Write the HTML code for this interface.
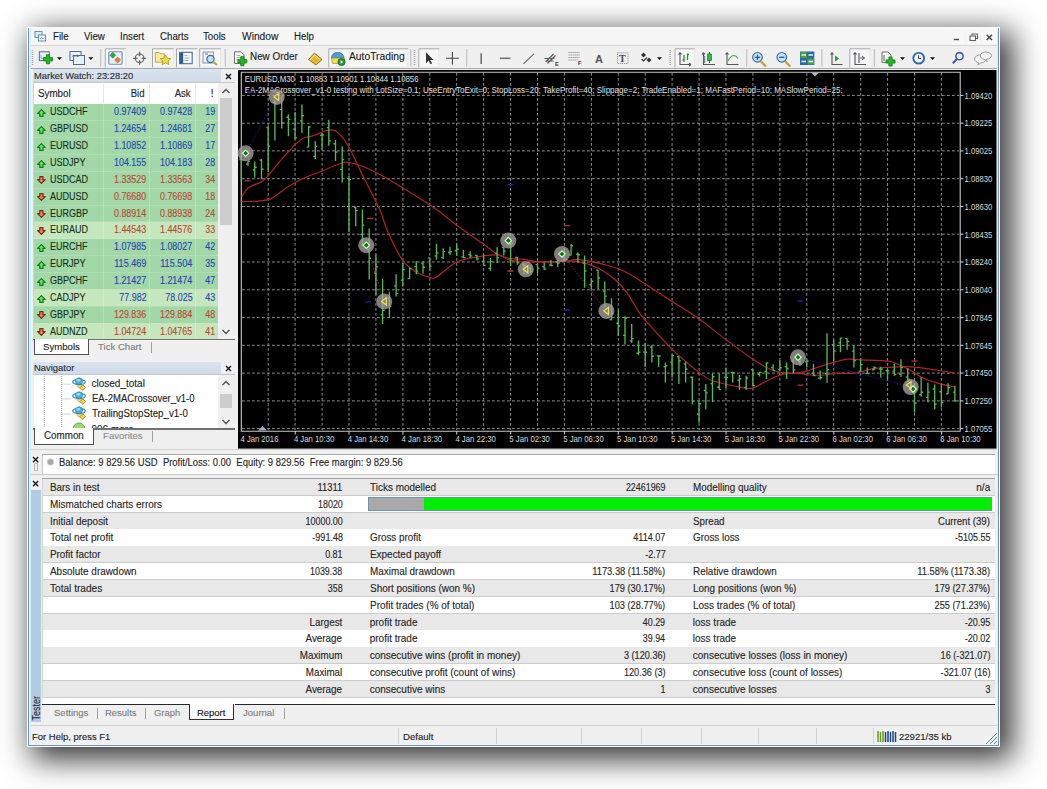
<!DOCTYPE html><html><head><meta charset="utf-8"><style>
*{margin:0;padding:0;box-sizing:border-box}
html,body{width:1047px;height:789px;overflow:hidden;background:#fff}
body{position:relative;font-family:"Liberation Sans",sans-serif;font-size:10px;color:#1e1e1e}
.a{position:absolute}
.t{position:absolute;white-space:nowrap;line-height:1;-webkit-text-stroke:0.12px currentColor}
svg{position:absolute;overflow:visible}
</style></head><body>
<div class="a" style="left:27px;top:26.5px;width:973px;height:720.2px;background:#f0f0f0;box-shadow:8px 8px 29px 4.5px rgba(0,0,0,0.8)"></div>
<div class="a" style="left:27px;top:26.5px;width:973px;height:720.2px;background:transparent;border:1px solid #f6fbfe"></div>
<div class="a" style="left:28px;top:27.5px;width:971px;height:718.2px;background:transparent;border:1.5px solid #6f94b4;border-top:none"></div>
<div class="a" style="left:29.5px;top:27.5px;width:968px;height:715.7px;background:transparent;border:1px solid #d8f0fa;border-top:none"></div>
<div class="a" style="left:30.5px;top:27.5px;width:966px;height:18px;background:#f6f6f6;"></div>
<div class="a" style="left:30.5px;top:45.2px;width:966px;height:1px;background:#d6d6d6;"></div>
<div class="t" style="left:53.30px;top:32.33px;font-size:10px;color:#1a1a1a;transform-origin:0 0;transform:scaleX(0.970);">File</div>
<div class="t" style="left:83.90px;top:32.33px;font-size:10px;color:#1a1a1a;transform-origin:0 0;transform:scaleX(0.970);">View</div>
<div class="t" style="left:119.80px;top:32.33px;font-size:10px;color:#1a1a1a;transform-origin:0 0;transform:scaleX(0.970);">Insert</div>
<div class="t" style="left:159.50px;top:32.33px;font-size:10px;color:#1a1a1a;transform-origin:0 0;transform:scaleX(0.970);">Charts</div>
<div class="t" style="left:203.30px;top:32.33px;font-size:10px;color:#1a1a1a;transform-origin:0 0;transform:scaleX(0.970);">Tools</div>
<div class="t" style="left:242.00px;top:32.33px;font-size:10px;color:#1a1a1a;transform-origin:0 0;transform:scaleX(1.020);">Window</div>
<div class="t" style="left:294.00px;top:32.33px;font-size:10px;color:#1a1a1a;transform-origin:0 0;transform:scaleX(0.970);">Help</div>
<div class="a" style="left:30.5px;top:46.2px;width:966px;height:22px;background:#f0f0f0;"></div>
<div class="a" style="left:30.5px;top:68px;width:966px;height:1px;background:#a8a8a8;"></div>
<svg style="left:0px;top:0px" width="1047" height="75" viewBox="0 0 1047 75"><rect x="35" y="31.5" width="7" height="6" fill="#dceaf6" stroke="#6a8cb0" stroke-width="1"/><rect x="38.5" y="35" width="7" height="6" fill="#e8f2fa" stroke="#6a8cb0" stroke-width="1"/><path d="M40 39l1.5-1.5l1.5 1.5l1.5-1.5" stroke="#6a8cb0" stroke-width="0.7" fill="none"/><rect x="951" y="30.5" width="13" height="13.5" fill="#f8f8f8"/><rect x="967" y="30.5" width="13" height="13.5" fill="#f8f8f8"/><rect x="982.5" y="30.5" width="13" height="13.5" fill="#f8f8f8"/><path d="M953.8 39.5H959" stroke="#505050" stroke-width="1.5"/><rect x="970" y="36" width="5.5" height="4.5" fill="none" stroke="#606060" stroke-width="1.1"/><path d="M972 35.5V34h5.5v4.5H976" fill="none" stroke="#606060" stroke-width="1.1"/><path d="M986.7 34.7L992 40M992 34.7L986.7 40" stroke="#484848" stroke-width="1.5"/><path d="M32.5 50V66" stroke="#a0a0a0" stroke-width="1.6" stroke-dasharray="1 1"/><rect x="39.3" y="51.8" width="10" height="8.7" fill="#e4f0fa" stroke="#5a6a80" stroke-width="1"/><path d="M41 54.5v4h3" stroke="#8a9ab0" stroke-width="0.8" fill="none"/><path d="M46.4 54.8H49.6V57.6H52.5V60.9H49.6V63.8H46.4V60.9H43.5V57.6H46.4Z" fill="#22b822" stroke="#0a7a0a" stroke-width="0.8"/><path d="M57.0 57.3h5l-2.5 2.8z" fill="#111"/><rect x="70" y="51.5" width="11" height="9" fill="#e4f0fa" stroke="#5a6a80" stroke-width="1"/><rect x="73.5" y="55.5" width="11" height="9" fill="#e4f0fa" stroke="#5a6a80" stroke-width="1"/><path d="M72 56h7l-1.5-1.2M77 56.8l1.5-0.8" stroke="#5a6a80" stroke-width="0.8" fill="none"/><path d="M88.3 57.3h5l-2.5 2.8z" fill="#111"/><path d="M100.7 49V66.5" stroke="#bcbcbc" stroke-width="1.1"/><rect x="104.8" y="48.3" width="21.2" height="19.2" fill="#f7f7f7"/><path d="M105.3 67.5V48.8H126.0" stroke="#a8a8a8" stroke-width="1" fill="none"/><path d="M125.5 49.3V67.0H105.8" stroke="#e6e6e6" stroke-width="1" fill="none"/><rect x="108.8" y="51.8" width="13.3" height="12.5" rx="1" fill="#e8f2fa" stroke="#6a8ab0" stroke-width="1.1"/><path d="M112.8 52.3l3 3l-3 3l-3-3z" fill="#30a848" stroke="#1a7a30" stroke-width="0.5"/><path d="M117.6 57l3 3l-3 3l-3-3z" fill="#f07a40" stroke="#b04a20" stroke-width="0.5"/><circle cx="139.6" cy="58.3" r="4.3" fill="none" stroke="#606060" stroke-width="1.1"/><path d="M139.6 51.8V56.3M139.6 60.3V64.8M133.1 58.3H137.6M141.6 58.3H146.1" stroke="#606060" stroke-width="1.2"/><rect x="152" y="48.3" width="21.8" height="19.2" fill="#f7f7f7"/><path d="M152.5 67.5V48.8H173.8" stroke="#a8a8a8" stroke-width="1" fill="none"/><path d="M173.3 49.3V67.0H153.0" stroke="#e6e6e6" stroke-width="1" fill="none"/><path d="M155.3 52.5h4l1 1.2h4v8.5h-9z" fill="#f8eaa0" stroke="#b8a040" stroke-width="0.9"/><path d="M165.5 55l1.7 3.3 3.6 .4-2.7 2.4 .8 3.6-3.4-1.9-3.4 1.9.8-3.6-2.7-2.4 3.6-.4z" fill="#f4dc40" stroke="#a89020" stroke-width="0.8"/><rect x="176" y="48.3" width="21.4" height="19.2" fill="#f7f7f7"/><path d="M176.5 67.5V48.8H197.4" stroke="#a8a8a8" stroke-width="1" fill="none"/><path d="M196.9 49.3V67.0H177.0" stroke="#e6e6e6" stroke-width="1" fill="none"/><rect x="179.6" y="52.3" width="12.6" height="11.4" fill="#f4f8fc" stroke="#4a6a90" stroke-width="1.1"/><rect x="180" y="52.7" width="3.2" height="10.8" fill="#2a5a90"/><path d="M184.5 55.5h3M184.5 58h5M184.5 60.5h4" stroke="#90a8c8" stroke-width="0.9"/><rect x="199.2" y="48.3" width="21.8" height="19.2" fill="#f7f7f7"/><path d="M199.7 67.5V48.8H221.0" stroke="#a8a8a8" stroke-width="1" fill="none"/><path d="M220.5 49.3V67.0H200.2" stroke="#e6e6e6" stroke-width="1" fill="none"/><rect x="203" y="52" width="10.5" height="11" fill="#f0f4f8" stroke="#7a8aa0" stroke-width="0.9"/><circle cx="210.5" cy="59" r="3.6" fill="#bfe0f4" stroke="#3a6a9a" stroke-width="1.2"/><path d="M213 61.5l4 3.6" stroke="#c8a030" stroke-width="2"/><path d="M205 54h3" stroke="#3a6a9a" stroke-width="0.9"/><path d="M225.3 49V66.5" stroke="#bcbcbc" stroke-width="1.1"/><path d="M234.5 51.8h6.5l3 3v8.7h-9.5z" fill="#fafafa" stroke="#707070" stroke-width="1"/><path d="M236.5 55.5h4M236.5 57.5h5M236.5 59.5h3" stroke="#9a9a9a" stroke-width="0.8"/><path d="M240.7 56.7H244.0V59.6H246.8V62.9H244.0V65.7H240.7V62.9H237.8V59.6H240.7Z" fill="#22b822" stroke="#0a7a0a" stroke-width="0.8"/><path d="M308.5 59.5l6-6.5l7.5 6.5l-6 5.5z" fill="#e8b830" stroke="#8a6a10" stroke-width="0.9"/><path d="M310 59.8l4.6-4.9 5.5 4.8" stroke="#fff0a0" stroke-width="0.9" fill="none"/><rect x="328.3" y="48.3" width="80.0" height="19.2" fill="#f7f7f7"/><path d="M328.8 67.5V48.8H408.3" stroke="#a8a8a8" stroke-width="1" fill="none"/><path d="M407.8 49.3V67.0H329.3" stroke="#e6e6e6" stroke-width="1" fill="none"/><path d="M331.5 58c0-3.5 2.5-5.5 6-5.5c3.5 0 6 2 6.5 5z" fill="#4aa0d8" stroke="#2a70a8" stroke-width="0.8"/><path d="M331.5 58h13l-1 5.5h-11z" fill="#f2dc58" stroke="#b09a30" stroke-width="0.8"/><circle cx="341.5" cy="62" r="3.6" fill="#1e9a30" stroke="#0a6a1a" stroke-width="0.8"/><path d="M340.5 60.2v3.6l2.8-1.8z" fill="#fff"/><path d="M410.8 49V66.5" stroke="#bcbcbc" stroke-width="1.1"/><path d="M414.5 50V66" stroke="#a0a0a0" stroke-width="1.6" stroke-dasharray="1 1"/><rect x="418.3" y="48.3" width="21.1" height="19.2" fill="#f7f7f7"/><path d="M418.8 67.5V48.8H439.4" stroke="#a8a8a8" stroke-width="1" fill="none"/><path d="M438.9 49.3V67.0H419.3" stroke="#e6e6e6" stroke-width="1" fill="none"/><path d="M426 52.2v11l2.5-2.6l2 3.6l1.6-.9l-2-3.4h3.5z" fill="#333"/><path d="M452.4 52v12.6M446 58.3h12.8" stroke="#444" stroke-width="1.1"/><path d="M466.7 49V66.5" stroke="#bcbcbc" stroke-width="1.1"/><path d="M481.2 53.3V63.9" stroke="#707070" stroke-width="1.6"/><path d="M499.8 58.3H510.4" stroke="#707070" stroke-width="1.5"/><path d="M523.4 63.9L534 53.9" stroke="#707070" stroke-width="1.3"/><path d="M545.5 62l8-8M547.5 63.5l8-8M544.5 58.5h10M545.5 61h8" stroke="#555" stroke-width="1.1"/><text x="555" y="65.5" font-family="Liberation Sans" font-weight="bold" font-size="5.5px" fill="#333">E</text><path d="M568.5 52.5h11M568.5 55h11M568.5 57.5h11M568.5 60h9" stroke="#777" stroke-width="0.9" stroke-dasharray="1.2 0.8"/><text x="578" y="65" font-family="Liberation Sans" font-weight="bold" font-size="5.5px" fill="#333">F</text><text x="595" y="63.2" font-family="Liberation Sans" font-weight="bold" font-size="11px" fill="#555">A</text><rect x="617.5" y="52.8" width="10.5" height="10.7" fill="none" stroke="#777" stroke-width="0.9" stroke-dasharray="1 1"/><text x="619" y="62" font-family="Liberation Serif" font-weight="bold" font-size="10px" fill="#444">T</text><path d="M641 55l2.5-2.5 2.5 2.5-2.5 2.5z" fill="#333"/><path d="M646.5 60l2.5-2.5 2.5 2.5-2.5 2.5z" fill="#333"/><path d="M641.5 59l2 2 3.5-3.5" stroke="#333" stroke-width="1.2" fill="none"/><path d="M657.0 57.3h5l-2.5 2.8z" fill="#111"/><path d="M670.2 50V66" stroke="#a0a0a0" stroke-width="1.6" stroke-dasharray="1 1"/><rect x="674.5" y="48.3" width="20.5" height="19.2" fill="#f7f7f7"/><path d="M675.0 67.5V48.8H695.0" stroke="#a8a8a8" stroke-width="1" fill="none"/><path d="M694.5 49.3V67.0H675.5" stroke="#e6e6e6" stroke-width="1" fill="none"/><path d="M680 52.5V64.5H691M680 52.5l-1.5 2M680 52.5l1.5 2M691 64.5l-2-1.5M691 64.5l-2 1.5" stroke="#505860" stroke-width="1.1" fill="none"/><path d="M684 55v7M682.5 60h1.5M687.5 53.5v6.5M687.5 54.5h1.5" stroke="#1a9a30" stroke-width="1.3" fill="none"/><path d="M703.5 52.5V64.5H715M703.5 52.5l-1.5 2M703.5 52.5l1.5 2" stroke="#505860" stroke-width="1.1" fill="none"/><path d="M709.5 52v11" stroke="#1a6a1a" stroke-width="1"/><rect x="707.6" y="54" width="3.8" height="6.5" fill="#28c040" stroke="#0a7a1a" stroke-width="0.7"/><path d="M704.5 56v7" stroke="#888" stroke-width="1.5"/><path d="M727 52.5V64.5H738.5M727 52.5l-1.5 2M727 52.5l1.5 2" stroke="#505860" stroke-width="1.1" fill="none"/><path d="M728 61c2-4 4-5.5 6-5.5c1.5 0 3 1.5 4 3" stroke="#48a050" stroke-width="1.1" fill="none"/><path d="M746.7 49V66.5" stroke="#bcbcbc" stroke-width="1.1"/><path d="M761.0 61.5l5 5" stroke="#c8a030" stroke-width="2.4"/><circle cx="757.5" cy="57.3" r="4.8" fill="#c0e4f8" stroke="#3a6a9a" stroke-width="1.2"/><path d="M754.9 57.3h5.2M757.5 54.7v5.2" stroke="#2a5a8a" stroke-width="1.3"/><path d="M785.3 61.5l5 5" stroke="#c8a030" stroke-width="2.4"/><circle cx="781.8" cy="57.3" r="4.8" fill="#c0e4f8" stroke="#3a6a9a" stroke-width="1.2"/><path d="M779.2 57.3h5.2" stroke="#2a5a8a" stroke-width="1.3"/><rect x="800" y="51.5" width="14.3" height="13.5" fill="#2a6aaa"/><rect x="800.5" y="52" width="6.4" height="6" fill="#48a048"/><rect x="807.6" y="58.5" width="6.4" height="6" fill="#48a048"/><path d="M801.5 55h4.5M808.5 55h4.5M801.5 61.5h4.5M808.5 61.5h4.5" stroke="#e8f4e8" stroke-width="1.6"/><path d="M821.9 49V66.5" stroke="#bcbcbc" stroke-width="1.1"/><path d="M832 52.5V64.5H842.5M832 52.5l-1.5 2M832 52.5l1.5 2" stroke="#505860" stroke-width="1.1" fill="none"/><path d="M835 55.5v6l4-3z" fill="#20a030"/><rect x="849.3" y="48.3" width="21.1" height="19.2" fill="#f7f7f7"/><path d="M849.8 67.5V48.8H870.4" stroke="#a8a8a8" stroke-width="1" fill="none"/><path d="M869.9 49.3V67.0H850.3" stroke="#e6e6e6" stroke-width="1" fill="none"/><path d="M855 52.5V64.5H866M855 52.5l-1.5 2M855 52.5l1.5 2M859 53v10" stroke="#505860" stroke-width="1.1" fill="none"/><path d="M860 58h4.5M862 56l2.5 2-2.5 2" stroke="#505860" stroke-width="1" fill="none"/><path d="M874.4 49V66.5" stroke="#bcbcbc" stroke-width="1.1"/><path d="M882 52h6l3 3v7.5h-9z" fill="#f6f6f6" stroke="#707070" stroke-width="1"/><path d="M884 55v6" stroke="#777" stroke-width="1.2"/><path d="M888.9 57.0H892.1V59.9H895.0V63.1H892.1V66.0H888.9V63.1H886.0V59.9H888.9Z" fill="#22b822" stroke="#0a7a0a" stroke-width="0.8"/><path d="M900.0 57.3h5l-2.5 2.8z" fill="#111"/><circle cx="918.7" cy="58.2" r="6.3" fill="#2a6ab0"/><circle cx="918.7" cy="58.2" r="4.4" fill="#f4f8fc"/><path d="M918.5 55.5v3h2.5" stroke="#333" stroke-width="0.9" fill="none"/><path d="M930.0 57.3h5l-2.5 2.8z" fill="#111"/><circle cx="959.5" cy="56.2" r="3.6" fill="#eef6fc" stroke="#3a5aa8" stroke-width="1.6"/><path d="M957 59l-4.2 4.2" stroke="#3a5aa8" stroke-width="2.2"/><path d="M980.5 55c-3.5 0-5.8 1.7-5.8 4c0 2 1.6 3.4 4 3.8l-.8 2.2 3-2.1c3.2-.2 5.4-1.8 5.4-3.9c0-2.3-2.5-4-5.8-4z" fill="#f4f4f4" stroke="#909090" stroke-width="0.9"/><path d="M986 52c-3.3 0-5.6 1.6-5.6 3.8c0 1.9 1.6 3.3 4 3.7l2.8 1.9-.7-2c2.4-.4 5-1.7 5-3.6c0-2.2-2.3-3.8-5.5-3.8z" fill="#f4f4f4" stroke="#909090" stroke-width="0.9"/></svg>
<div class="t" style="left:250.30px;top:51.97px;font-size:10.2px;color:#1a1a1a;transform-origin:0 0;transform:scaleX(0.969);">New Order</div>
<div class="t" style="left:349.00px;top:52.08px;font-size:10.3px;color:#1a1a1a;transform-origin:0 0;">AutoTrading</div>
<div class="a" style="left:32.5px;top:69px;width:202.5px;height:13px;background:#edf1f5;"></div>
<div class="a" style="left:32.5px;top:69px;width:188.7px;height:13px;background:linear-gradient(#dae4f0,#cfdbea);"></div>
<div class="t" style="left:33.80px;top:70.67px;font-size:9.6px;color:#2a2a2a;transform-origin:0 0;transform:scaleX(0.977);">Market Watch: 23:28:20</div>
<svg style="left:225.3px;top:72.5px" width="7.0" height="7.0"><path d="M1 1L6.0 6.0M6.0 1L1 6.0" stroke="#151515" stroke-width="1.35"/></svg>
<div class="a" style="left:32.5px;top:81.8px;width:202.5px;height:1.3px;background:#c6c6c6;"></div>
<div class="a" style="left:32.5px;top:83px;width:1px;height:256px;background:#d0d0d0;"></div>
<div class="a" style="left:33.5px;top:83px;width:184.7px;height:20.8px;background:#ffffff;"></div>
<div class="a" style="left:103.1px;top:84px;width:1px;height:19px;background:#e8e8e8;"></div>
<div class="a" style="left:149.4px;top:84px;width:1px;height:19px;background:#e8e8e8;"></div>
<div class="a" style="left:195.1px;top:84px;width:1px;height:19px;background:#e8e8e8;"></div>
<div class="t" style="left:38.00px;top:88.73px;font-size:10px;color:#222;transform-origin:0 0;transform:scaleX(0.980);">Symbol</div>
<div class="t" style="right:902.80px;top:88.73px;font-size:10px;color:#222;transform-origin:100% 0;transform:scaleX(0.954);">Bid</div>
<div class="t" style="right:856.00px;top:88.73px;font-size:10px;color:#222;transform-origin:100% 0;transform:scaleX(0.960);">Ask</div>
<div class="t" style="right:833.50px;top:88.73px;font-size:10px;color:#222;transform-origin:100% 0;">!</div>
<div class="a" style="left:33.5px;top:103.8px;width:184.7px;height:234.7px;background:#a2d7a8;"></div>
<div class="a" style="left:33.5px;top:120.2px;width:184.7px;height:0.6px;background:rgba(255,255,255,0.18);"></div>
<div class="a" style="left:33.5px;top:137.08px;width:184.7px;height:0.6px;background:rgba(255,255,255,0.18);"></div>
<div class="a" style="left:33.5px;top:153.96px;width:184.7px;height:0.6px;background:rgba(255,255,255,0.18);"></div>
<div class="a" style="left:33.5px;top:170.84px;width:184.7px;height:0.6px;background:rgba(255,255,255,0.18);"></div>
<div class="a" style="left:33.5px;top:187.72px;width:184.7px;height:0.6px;background:rgba(255,255,255,0.18);"></div>
<div class="a" style="left:33.5px;top:204.6px;width:184.7px;height:0.6px;background:rgba(255,255,255,0.18);"></div>
<div class="a" style="left:33.5px;top:221.48px;width:184.7px;height:0.6px;background:rgba(255,255,255,0.18);"></div>
<div class="a" style="left:33.5px;top:221.96px;width:184.7px;height:16.9px;background:#c6e6bd;"></div>
<div class="a" style="left:33.5px;top:238.36px;width:184.7px;height:0.6px;background:rgba(255,255,255,0.18);"></div>
<div class="a" style="left:33.5px;top:255.24px;width:184.7px;height:0.6px;background:rgba(255,255,255,0.18);"></div>
<div class="a" style="left:33.5px;top:272.12px;width:184.7px;height:0.6px;background:rgba(255,255,255,0.18);"></div>
<div class="a" style="left:33.5px;top:289.0px;width:184.7px;height:0.6px;background:rgba(255,255,255,0.18);"></div>
<div class="a" style="left:33.5px;top:289.48px;width:184.7px;height:16.9px;background:#c6e6bd;"></div>
<div class="a" style="left:33.5px;top:305.88px;width:184.7px;height:0.6px;background:rgba(255,255,255,0.18);"></div>
<div class="a" style="left:33.5px;top:322.76px;width:184.7px;height:0.6px;background:rgba(255,255,255,0.18);"></div>
<div class="a" style="left:33.5px;top:323.24px;width:184.7px;height:16.9px;background:#c6e6bd;"></div>
<div class="a" style="left:33.5px;top:339.64px;width:184.7px;height:0.6px;background:rgba(255,255,255,0.18);"></div>
<div class="a" style="left:103.1px;top:103.8px;width:1px;height:234.7px;background:rgba(255,255,255,0.22);"></div>
<div class="a" style="left:149.4px;top:103.8px;width:1px;height:234.7px;background:rgba(255,255,255,0.22);"></div>
<div class="a" style="left:195.1px;top:103.8px;width:1px;height:234.7px;background:rgba(255,255,255,0.22);"></div>
<div class="t" style="left:50.20px;top:107.33px;font-size:10px;color:#183018;transform-origin:0 0;transform:scaleX(0.900);">USDCHF</div>
<div class="t" style="right:900.70px;top:107.33px;font-size:10px;color:#2646b4;transform-origin:100% 0;transform:scaleX(0.890);">0.97409</div>
<div class="t" style="right:854.50px;top:107.33px;font-size:10px;color:#2646b4;transform-origin:100% 0;transform:scaleX(0.890);">0.97428</div>
<div class="t" style="right:831.40px;top:107.33px;font-size:10px;color:#2646b4;transform-origin:100% 0;transform:scaleX(0.890);">19</div>
<svg style="left:36.6px;top:109.00px" width="9" height="8" viewBox="0 0 9 8"><path d="M4.4 0.6L8.2 4.4H6V7.4H2.8V4.4H0.6Z" fill="#6ee06e" stroke="#0a800a" stroke-width="1.2" stroke-linejoin="round"/></svg>
<div class="t" style="left:50.20px;top:124.22px;font-size:10px;color:#183018;transform-origin:0 0;transform:scaleX(0.900);">GBPUSD</div>
<div class="t" style="right:900.70px;top:124.22px;font-size:10px;color:#2646b4;transform-origin:100% 0;transform:scaleX(0.890);">1.24654</div>
<div class="t" style="right:854.50px;top:124.22px;font-size:10px;color:#2646b4;transform-origin:100% 0;transform:scaleX(0.890);">1.24681</div>
<div class="t" style="right:831.40px;top:124.22px;font-size:10px;color:#2646b4;transform-origin:100% 0;transform:scaleX(0.890);">27</div>
<svg style="left:36.6px;top:125.88px" width="9" height="8" viewBox="0 0 9 8"><path d="M4.4 0.6L8.2 4.4H6V7.4H2.8V4.4H0.6Z" fill="#6ee06e" stroke="#0a800a" stroke-width="1.2" stroke-linejoin="round"/></svg>
<div class="t" style="left:50.20px;top:141.09px;font-size:10px;color:#183018;transform-origin:0 0;transform:scaleX(0.900);">EURUSD</div>
<div class="t" style="right:900.70px;top:141.09px;font-size:10px;color:#2646b4;transform-origin:100% 0;transform:scaleX(0.890);">1.10852</div>
<div class="t" style="right:854.50px;top:141.09px;font-size:10px;color:#2646b4;transform-origin:100% 0;transform:scaleX(0.890);">1.10869</div>
<div class="t" style="right:831.40px;top:141.09px;font-size:10px;color:#2646b4;transform-origin:100% 0;transform:scaleX(0.890);">17</div>
<svg style="left:36.6px;top:142.76px" width="9" height="8" viewBox="0 0 9 8"><path d="M4.4 0.6L8.2 4.4H6V7.4H2.8V4.4H0.6Z" fill="#6ee06e" stroke="#0a800a" stroke-width="1.2" stroke-linejoin="round"/></svg>
<div class="t" style="left:50.20px;top:157.97px;font-size:10px;color:#183018;transform-origin:0 0;transform:scaleX(0.900);">USDJPY</div>
<div class="t" style="right:900.70px;top:157.97px;font-size:10px;color:#2646b4;transform-origin:100% 0;transform:scaleX(0.890);">104.155</div>
<div class="t" style="right:854.50px;top:157.97px;font-size:10px;color:#2646b4;transform-origin:100% 0;transform:scaleX(0.890);">104.183</div>
<div class="t" style="right:831.40px;top:157.97px;font-size:10px;color:#2646b4;transform-origin:100% 0;transform:scaleX(0.890);">28</div>
<svg style="left:36.6px;top:159.64px" width="9" height="8" viewBox="0 0 9 8"><path d="M4.4 0.6L8.2 4.4H6V7.4H2.8V4.4H0.6Z" fill="#6ee06e" stroke="#0a800a" stroke-width="1.2" stroke-linejoin="round"/></svg>
<div class="t" style="left:50.20px;top:174.85px;font-size:10px;color:#183018;transform-origin:0 0;transform:scaleX(0.900);">USDCAD</div>
<div class="t" style="right:900.70px;top:174.85px;font-size:10px;color:#bc4830;transform-origin:100% 0;transform:scaleX(0.890);">1.33529</div>
<div class="t" style="right:854.50px;top:174.85px;font-size:10px;color:#bc4830;transform-origin:100% 0;transform:scaleX(0.890);">1.33563</div>
<div class="t" style="right:831.40px;top:174.85px;font-size:10px;color:#bc4830;transform-origin:100% 0;transform:scaleX(0.890);">34</div>
<svg style="left:36.6px;top:176.22px" width="9" height="8" viewBox="0 0 9 8"><path d="M4.4 7.4L8.2 3.6H6V0.6H2.8V3.6H0.6Z" fill="#f48060" stroke="#7a2a10" stroke-width="1.2" stroke-linejoin="round"/></svg>
<div class="t" style="left:50.20px;top:191.73px;font-size:10px;color:#183018;transform-origin:0 0;transform:scaleX(0.900);">AUDUSD</div>
<div class="t" style="right:900.70px;top:191.73px;font-size:10px;color:#bc4830;transform-origin:100% 0;transform:scaleX(0.890);">0.76680</div>
<div class="t" style="right:854.50px;top:191.73px;font-size:10px;color:#bc4830;transform-origin:100% 0;transform:scaleX(0.890);">0.76698</div>
<div class="t" style="right:831.40px;top:191.73px;font-size:10px;color:#bc4830;transform-origin:100% 0;transform:scaleX(0.890);">18</div>
<svg style="left:36.6px;top:193.10px" width="9" height="8" viewBox="0 0 9 8"><path d="M4.4 7.4L8.2 3.6H6V0.6H2.8V3.6H0.6Z" fill="#f48060" stroke="#7a2a10" stroke-width="1.2" stroke-linejoin="round"/></svg>
<div class="t" style="left:50.20px;top:208.61px;font-size:10px;color:#183018;transform-origin:0 0;transform:scaleX(0.900);">EURGBP</div>
<div class="t" style="right:900.70px;top:208.61px;font-size:10px;color:#bc4830;transform-origin:100% 0;transform:scaleX(0.890);">0.88914</div>
<div class="t" style="right:854.50px;top:208.61px;font-size:10px;color:#bc4830;transform-origin:100% 0;transform:scaleX(0.890);">0.88938</div>
<div class="t" style="right:831.40px;top:208.61px;font-size:10px;color:#bc4830;transform-origin:100% 0;transform:scaleX(0.890);">24</div>
<svg style="left:36.6px;top:209.98px" width="9" height="8" viewBox="0 0 9 8"><path d="M4.4 7.4L8.2 3.6H6V0.6H2.8V3.6H0.6Z" fill="#f48060" stroke="#7a2a10" stroke-width="1.2" stroke-linejoin="round"/></svg>
<div class="t" style="left:50.20px;top:225.49px;font-size:10px;color:#183018;transform-origin:0 0;transform:scaleX(0.900);">EURAUD</div>
<div class="t" style="right:900.70px;top:225.49px;font-size:10px;color:#bc4830;transform-origin:100% 0;transform:scaleX(0.890);">1.44543</div>
<div class="t" style="right:854.50px;top:225.49px;font-size:10px;color:#bc4830;transform-origin:100% 0;transform:scaleX(0.890);">1.44576</div>
<div class="t" style="right:831.40px;top:225.49px;font-size:10px;color:#bc4830;transform-origin:100% 0;transform:scaleX(0.890);">33</div>
<svg style="left:36.6px;top:226.86px" width="9" height="8" viewBox="0 0 9 8"><path d="M4.4 7.4L8.2 3.6H6V0.6H2.8V3.6H0.6Z" fill="#f48060" stroke="#7a2a10" stroke-width="1.2" stroke-linejoin="round"/></svg>
<div class="t" style="left:50.20px;top:242.37px;font-size:10px;color:#183018;transform-origin:0 0;transform:scaleX(0.900);">EURCHF</div>
<div class="t" style="right:900.70px;top:242.37px;font-size:10px;color:#2646b4;transform-origin:100% 0;transform:scaleX(0.890);">1.07985</div>
<div class="t" style="right:854.50px;top:242.37px;font-size:10px;color:#2646b4;transform-origin:100% 0;transform:scaleX(0.890);">1.08027</div>
<div class="t" style="right:831.40px;top:242.37px;font-size:10px;color:#2646b4;transform-origin:100% 0;transform:scaleX(0.890);">42</div>
<svg style="left:36.6px;top:244.04px" width="9" height="8" viewBox="0 0 9 8"><path d="M4.4 0.6L8.2 4.4H6V7.4H2.8V4.4H0.6Z" fill="#6ee06e" stroke="#0a800a" stroke-width="1.2" stroke-linejoin="round"/></svg>
<div class="t" style="left:50.20px;top:259.25px;font-size:10px;color:#183018;transform-origin:0 0;transform:scaleX(0.900);">EURJPY</div>
<div class="t" style="right:900.70px;top:259.25px;font-size:10px;color:#2646b4;transform-origin:100% 0;transform:scaleX(0.909);">115.469</div>
<div class="t" style="right:854.50px;top:259.25px;font-size:10px;color:#2646b4;transform-origin:100% 0;transform:scaleX(0.909);">115.504</div>
<div class="t" style="right:831.40px;top:259.25px;font-size:10px;color:#2646b4;transform-origin:100% 0;transform:scaleX(0.890);">35</div>
<svg style="left:36.6px;top:260.92px" width="9" height="8" viewBox="0 0 9 8"><path d="M4.4 0.6L8.2 4.4H6V7.4H2.8V4.4H0.6Z" fill="#6ee06e" stroke="#0a800a" stroke-width="1.2" stroke-linejoin="round"/></svg>
<div class="t" style="left:50.20px;top:276.13px;font-size:10px;color:#183018;transform-origin:0 0;transform:scaleX(0.900);">GBPCHF</div>
<div class="t" style="right:900.70px;top:276.13px;font-size:10px;color:#2646b4;transform-origin:100% 0;transform:scaleX(0.890);">1.21427</div>
<div class="t" style="right:854.50px;top:276.13px;font-size:10px;color:#2646b4;transform-origin:100% 0;transform:scaleX(0.890);">1.21474</div>
<div class="t" style="right:831.40px;top:276.13px;font-size:10px;color:#2646b4;transform-origin:100% 0;transform:scaleX(0.890);">47</div>
<svg style="left:36.6px;top:277.80px" width="9" height="8" viewBox="0 0 9 8"><path d="M4.4 0.6L8.2 4.4H6V7.4H2.8V4.4H0.6Z" fill="#6ee06e" stroke="#0a800a" stroke-width="1.2" stroke-linejoin="round"/></svg>
<div class="t" style="left:50.20px;top:293.01px;font-size:10px;color:#183018;transform-origin:0 0;transform:scaleX(0.900);">CADJPY</div>
<div class="t" style="right:900.70px;top:293.01px;font-size:10px;color:#2646b4;transform-origin:100% 0;transform:scaleX(0.890);">77.982</div>
<div class="t" style="right:854.50px;top:293.01px;font-size:10px;color:#2646b4;transform-origin:100% 0;transform:scaleX(0.890);">78.025</div>
<div class="t" style="right:831.40px;top:293.01px;font-size:10px;color:#2646b4;transform-origin:100% 0;transform:scaleX(0.890);">43</div>
<svg style="left:36.6px;top:294.68px" width="9" height="8" viewBox="0 0 9 8"><path d="M4.4 0.6L8.2 4.4H6V7.4H2.8V4.4H0.6Z" fill="#6ee06e" stroke="#0a800a" stroke-width="1.2" stroke-linejoin="round"/></svg>
<div class="t" style="left:50.20px;top:309.90px;font-size:10px;color:#183018;transform-origin:0 0;transform:scaleX(0.900);">GBPJPY</div>
<div class="t" style="right:900.70px;top:309.90px;font-size:10px;color:#bc4830;transform-origin:100% 0;transform:scaleX(0.890);">129.836</div>
<div class="t" style="right:854.50px;top:309.90px;font-size:10px;color:#bc4830;transform-origin:100% 0;transform:scaleX(0.890);">129.884</div>
<div class="t" style="right:831.40px;top:309.90px;font-size:10px;color:#bc4830;transform-origin:100% 0;transform:scaleX(0.890);">48</div>
<svg style="left:36.6px;top:311.26px" width="9" height="8" viewBox="0 0 9 8"><path d="M4.4 7.4L8.2 3.6H6V0.6H2.8V3.6H0.6Z" fill="#f48060" stroke="#7a2a10" stroke-width="1.2" stroke-linejoin="round"/></svg>
<div class="t" style="left:50.20px;top:326.78px;font-size:10px;color:#183018;transform-origin:0 0;transform:scaleX(0.900);">AUDNZD</div>
<div class="t" style="right:900.70px;top:326.78px;font-size:10px;color:#bc4830;transform-origin:100% 0;transform:scaleX(0.890);">1.04724</div>
<div class="t" style="right:854.50px;top:326.78px;font-size:10px;color:#bc4830;transform-origin:100% 0;transform:scaleX(0.890);">1.04765</div>
<div class="t" style="right:831.40px;top:326.78px;font-size:10px;color:#bc4830;transform-origin:100% 0;transform:scaleX(0.890);">41</div>
<svg style="left:36.6px;top:328.14px" width="9" height="8" viewBox="0 0 9 8"><path d="M4.4 7.4L8.2 3.6H6V0.6H2.8V3.6H0.6Z" fill="#f48060" stroke="#7a2a10" stroke-width="1.2" stroke-linejoin="round"/></svg>
<div class="a" style="left:218.2px;top:83px;width:16px;height:255px;background:#f0f0f0;"></div>
<div class="a" style="left:220.3px;top:98px;width:11.7px;height:127px;background:#cdcdcd;"></div>
<svg style="left:221px;top:87px" width="10" height="8"><path d="M1.5 6 L5 2.5 L8.5 6" stroke="#555" stroke-width="1.5" fill="none"/></svg>
<svg style="left:221px;top:328px" width="10" height="8"><path d="M1.5 2 L5 5.5 L8.5 2" stroke="#555" stroke-width="1.5" fill="none"/></svg>
<div class="a" style="left:32.5px;top:338.5px;width:1.5px;height:1.5px;background:#707070;"></div>
<div class="a" style="left:89px;top:338.5px;width:146px;height:1.5px;background:#707070;"></div>
<div class="a" style="left:34px;top:338.5px;width:55px;height:16.5px;background:#ffffff;border:1.2px solid #505050;border-top:none"></div>
<div class="t" style="left:43.00px;top:342.10px;font-size:9.8px;color:#222;transform-origin:0 0;transform:scaleX(0.983);">Symbols</div>
<div class="t" style="left:97.80px;top:342.10px;font-size:9.8px;color:#7c7c7c;transform-origin:0 0;transform:scaleX(0.979);">Tick Chart</div>
<div class="a" style="left:151px;top:342px;width:1px;height:11px;background:#a0a0a0;"></div>
<div class="a" style="left:32.5px;top:361.5px;width:202.5px;height:12.3px;background:#edf1f5;"></div>
<div class="a" style="left:32.5px;top:361.5px;width:188.7px;height:12.3px;background:linear-gradient(#dae4f0,#cfdbea);"></div>
<div class="t" style="left:33.50px;top:362.77px;font-size:9.6px;color:#2a2a2a;transform-origin:0 0;transform:scaleX(0.983);">Navigator</div>
<svg style="left:225.3px;top:365px" width="7.0" height="7.0"><path d="M1 1L6.0 6.0M6.0 1L1 6.0" stroke="#151515" stroke-width="1.35"/></svg>
<div class="a" style="left:32.5px;top:373.6px;width:202.5px;height:1.2px;background:#c6c6c6;"></div>
<div class="a" style="left:33.5px;top:374.5px;width:184.7px;height:54px;background:#ffffff;"></div>
<div class="a" style="left:218.2px;top:374.5px;width:16px;height:54px;background:#f0f0f0;"></div>
<div class="a" style="left:220.3px;top:394px;width:11.7px;height:14px;background:#cdcdcd;"></div>
<svg style="left:221px;top:379px" width="10" height="8"><path d="M1.5 6 L5 2.5 L8.5 6" stroke="#555" stroke-width="1.5" fill="none"/></svg>
<svg style="left:221px;top:418px" width="10" height="8"><path d="M1.5 2 L5 5.5 L8.5 2" stroke="#555" stroke-width="1.5" fill="none"/></svg>
<svg style="left:33px;top:374px" width="185" height="54"><g stroke="#a8a8a8" stroke-width="1" stroke-dasharray="1 1"><path d="M11.3 0 V54 M28.6 0 V54 M28.6 10.2 H38 M28.6 24.9 H38 M28.6 40.1 H38"/></g></svg>
<svg style="left:72px;top:376.5px" width="15" height="14"><path d="M4 6.5Q7 10 10 7.5L11 10.5L8 11.5Q5 10.5 4 6.5Z" fill="#f2e08a" stroke="#b89a40" stroke-width="0.6"/><ellipse cx="7" cy="5" rx="6.3" ry="2.4" fill="none" stroke="#2e7aa8" stroke-width="1.1"/><circle cx="7" cy="4.3" r="3.5" fill="#48aee0" stroke="#2a78a8" stroke-width="0.6"/><ellipse cx="6.3" cy="3.3" rx="2" ry="1.2" fill="#a0daf6"/><path d="M10.8 7.8L13.6 10.6L10.8 13.4L8 10.6Z" fill="#f2d452" stroke="#9a7a20" stroke-width="0.8"/></svg>
<div class="t" style="left:91.50px;top:379.34px;font-size:10px;color:#222;transform-origin:0 0;">closed_total</div>
<svg style="left:72px;top:391.4px" width="15" height="14"><path d="M4 6.5Q7 10 10 7.5L11 10.5L8 11.5Q5 10.5 4 6.5Z" fill="#f2e08a" stroke="#b89a40" stroke-width="0.6"/><ellipse cx="7" cy="5" rx="6.3" ry="2.4" fill="none" stroke="#2e7aa8" stroke-width="1.1"/><circle cx="7" cy="4.3" r="3.5" fill="#48aee0" stroke="#2a78a8" stroke-width="0.6"/><ellipse cx="6.3" cy="3.3" rx="2" ry="1.2" fill="#a0daf6"/><path d="M10.8 7.8L13.6 10.6L10.8 13.4L8 10.6Z" fill="#f2d452" stroke="#9a7a20" stroke-width="0.8"/></svg>
<div class="t" style="left:91.50px;top:394.29px;font-size:10px;color:#222;transform-origin:0 0;transform:scaleX(0.950);">EA-2MACrossover_v1-0</div>
<svg style="left:72px;top:406.4px" width="15" height="14"><path d="M4 6.5Q7 10 10 7.5L11 10.5L8 11.5Q5 10.5 4 6.5Z" fill="#f2e08a" stroke="#b89a40" stroke-width="0.6"/><ellipse cx="7" cy="5" rx="6.3" ry="2.4" fill="none" stroke="#2e7aa8" stroke-width="1.1"/><circle cx="7" cy="4.3" r="3.5" fill="#48aee0" stroke="#2a78a8" stroke-width="0.6"/><ellipse cx="6.3" cy="3.3" rx="2" ry="1.2" fill="#a0daf6"/><path d="M10.8 7.8L13.6 10.6L10.8 13.4L8 10.6Z" fill="#f2d452" stroke="#9a7a20" stroke-width="0.8"/></svg>
<div class="t" style="left:91.50px;top:409.24px;font-size:10px;color:#222;transform-origin:0 0;transform:scaleX(0.972);">TrailingStopStep_v1-0</div>
<svg style="left:72px;top:422px" width="14" height="6"><path d="M1 7 A6 6 0 0 1 13 7Z" fill="#9ad870" stroke="#4a9a30" stroke-width="0.8"/></svg>
<div class="a" style="left:88px;top:424.5px;width:60px;height:3.5px;overflow:hidden"><div class="t" style="left:3.5px;top:0px;font-size:10px;color:#222">906 more</div></div>
<div class="a" style="left:32.5px;top:428px;width:1.8px;height:1.5px;background:#707070;"></div>
<div class="a" style="left:94.3px;top:428px;width:140.7px;height:1.5px;background:#707070;"></div>
<div class="a" style="left:34.3px;top:428px;width:60px;height:16.5px;background:#ffffff;border:1.2px solid #505050;border-top:none"></div>
<div class="t" style="left:43.80px;top:430.84px;font-size:10px;color:#222;transform-origin:0 0;transform:scaleX(0.982);">Common</div>
<div class="t" style="left:103.00px;top:431.00px;font-size:9.8px;color:#8c8c8c;transform-origin:0 0;transform:scaleX(0.985);">Favorites</div>
<div class="a" style="left:152px;top:431px;width:1px;height:11px;background:#a0a0a0;"></div>
<svg style="left:238px;top:70px" width="758.5" height="378.6" viewBox="238 70 758.5 378.6"><rect x="238" y="70" width="758.5" height="378.6" fill="#000"/><path d="M268.2 73V430 M295.1 73V430 M322.1 73V430 M349.0 73V430 M375.9 73V430 M402.9 73V430 M429.8 73V430 M456.7 73V430 M483.6 73V430 M510.6 73V430 M537.5 73V430 M564.4 73V430 M591.4 73V430 M618.3 73V430 M645.2 73V430 M672.1 73V430 M699.1 73V430 M726.0 73V430 M752.9 73V430 M779.9 73V430 M806.8 73V430 M833.7 73V430 M860.7 73V430 M887.6 73V430 M914.5 73V430 M941.4 73V430 M242 95.4H959 M242 123.2H959 M242 150.9H959 M242 178.7H959 M242 206.5H959 M242 234.2H959 M242 262.0H959 M242 289.8H959 M242 317.6H959 M242 345.3H959 M242 373.1H959 M242 400.9H959 M242 428.6H959" stroke="#8e8e8e" stroke-width="1" stroke-dasharray="2.8 2.2" fill="none"/><path d="M241.3 72.3H960.2V431.2H241.3Z" stroke="#c8c8c8" stroke-width="1.1" fill="none"/><path d="M960 95.4H963.5" stroke="#c8c8c8" stroke-width="1.1"/><path d="M960 123.2H963.5" stroke="#c8c8c8" stroke-width="1.1"/><path d="M960 150.9H963.5" stroke="#c8c8c8" stroke-width="1.1"/><path d="M960 178.7H963.5" stroke="#c8c8c8" stroke-width="1.1"/><path d="M960 206.5H963.5" stroke="#c8c8c8" stroke-width="1.1"/><path d="M960 234.2H963.5" stroke="#c8c8c8" stroke-width="1.1"/><path d="M960 262.0H963.5" stroke="#c8c8c8" stroke-width="1.1"/><path d="M960 289.8H963.5" stroke="#c8c8c8" stroke-width="1.1"/><path d="M960 317.6H963.5" stroke="#c8c8c8" stroke-width="1.1"/><path d="M960 345.3H963.5" stroke="#c8c8c8" stroke-width="1.1"/><path d="M960 373.1H963.5" stroke="#c8c8c8" stroke-width="1.1"/><path d="M960 400.9H963.5" stroke="#c8c8c8" stroke-width="1.1"/><path d="M960 428.6H963.5" stroke="#c8c8c8" stroke-width="1.1"/><path d="M295.2 431V434.5" stroke="#c8c8c8" stroke-width="1.1"/><path d="M349.0 431V434.5" stroke="#c8c8c8" stroke-width="1.1"/><path d="M402.9 431V434.5" stroke="#c8c8c8" stroke-width="1.1"/><path d="M456.7 431V434.5" stroke="#c8c8c8" stroke-width="1.1"/><path d="M510.6 431V434.5" stroke="#c8c8c8" stroke-width="1.1"/><path d="M564.5 431V434.5" stroke="#c8c8c8" stroke-width="1.1"/><path d="M618.3 431V434.5" stroke="#c8c8c8" stroke-width="1.1"/><path d="M672.2 431V434.5" stroke="#c8c8c8" stroke-width="1.1"/><path d="M726.0 431V434.5" stroke="#c8c8c8" stroke-width="1.1"/><path d="M779.9 431V434.5" stroke="#c8c8c8" stroke-width="1.1"/><path d="M833.8 431V434.5" stroke="#c8c8c8" stroke-width="1.1"/><path d="M887.6 431V434.5" stroke="#c8c8c8" stroke-width="1.1"/><path d="M941.5 431V434.5" stroke="#c8c8c8" stroke-width="1.1"/><g fill="#dcdcdc" font-family="Liberation Sans" font-size="9px"><text x="964.6" y="98.7" textLength="27.7" lengthAdjust="spacingAndGlyphs">1.09420</text><text x="964.6" y="126.5" textLength="27.7" lengthAdjust="spacingAndGlyphs">1.09225</text><text x="964.6" y="154.2" textLength="27.7" lengthAdjust="spacingAndGlyphs">1.09025</text><text x="964.6" y="182.0" textLength="27.7" lengthAdjust="spacingAndGlyphs">1.08830</text><text x="964.6" y="209.8" textLength="27.7" lengthAdjust="spacingAndGlyphs">1.08630</text><text x="964.6" y="237.6" textLength="27.7" lengthAdjust="spacingAndGlyphs">1.08435</text><text x="964.6" y="265.3" textLength="27.7" lengthAdjust="spacingAndGlyphs">1.08240</text><text x="964.6" y="293.1" textLength="27.7" lengthAdjust="spacingAndGlyphs">1.08040</text><text x="964.6" y="320.9" textLength="27.7" lengthAdjust="spacingAndGlyphs">1.07845</text><text x="964.6" y="348.6" textLength="27.7" lengthAdjust="spacingAndGlyphs">1.07645</text><text x="964.6" y="376.4" textLength="27.7" lengthAdjust="spacingAndGlyphs">1.07450</text><text x="964.6" y="404.2" textLength="27.7" lengthAdjust="spacingAndGlyphs">1.07250</text><text x="964.6" y="431.9" textLength="27.7" lengthAdjust="spacingAndGlyphs">1.07055</text><text x="240.5" y="441.9" textLength="37.9" lengthAdjust="spacingAndGlyphs">4 Jan 2016</text><text x="293.9" y="441.9" textLength="40.5" lengthAdjust="spacingAndGlyphs">4 Jan 10:30</text><text x="347.7" y="441.9" textLength="40.5" lengthAdjust="spacingAndGlyphs">4 Jan 14:30</text><text x="401.6" y="441.9" textLength="40.5" lengthAdjust="spacingAndGlyphs">4 Jan 18:30</text><text x="455.4" y="441.9" textLength="40.5" lengthAdjust="spacingAndGlyphs">4 Jan 22:30</text><text x="509.3" y="441.9" textLength="40.5" lengthAdjust="spacingAndGlyphs">5 Jan 02:30</text><text x="563.2" y="441.9" textLength="40.5" lengthAdjust="spacingAndGlyphs">5 Jan 06:30</text><text x="617.0" y="441.9" textLength="40.5" lengthAdjust="spacingAndGlyphs">5 Jan 10:30</text><text x="670.9" y="441.9" textLength="40.5" lengthAdjust="spacingAndGlyphs">5 Jan 14:30</text><text x="724.7" y="441.9" textLength="40.5" lengthAdjust="spacingAndGlyphs">5 Jan 18:30</text><text x="778.6" y="441.9" textLength="40.5" lengthAdjust="spacingAndGlyphs">5 Jan 22:30</text><text x="832.5" y="441.9" textLength="40.5" lengthAdjust="spacingAndGlyphs">6 Jan 02:30</text><text x="886.3" y="441.9" textLength="40.5" lengthAdjust="spacingAndGlyphs">6 Jan 06:30</text><text x="940.2" y="441.9" textLength="40.5" lengthAdjust="spacingAndGlyphs">6 Jan 10:30</text></g><text x="244.7" y="82" fill="#e0e0e0" font-family="Liberation Sans" font-size="8.8px" xml:space="preserve" textLength="173.8" lengthAdjust="spacingAndGlyphs">EURUSD,M30  1.10883 1.10901 1.10844 1.10856</text><text x="244.7" y="92.7" fill="#e0e0e0" font-family="Liberation Sans" font-size="8.8px" textLength="598" lengthAdjust="spacingAndGlyphs">EA-2MACrossover_v1-0 testing with LotSize=0.1; UseEntryToExit=0; StopLoss=20; TakeProfit=40; Slippage=2; TradeEnabled=1; MAFastPeriod=10; MASlowPeriod=25;</text><path d="M241.7 201.6 C246.1 201.3 261.0 201.9 268.4 199.6 C275.8 197.3 280.5 191.4 286.0 188.0 C291.5 184.6 295.7 182.0 301.4 179.3 C307.1 176.6 314.1 174.2 320.4 171.7 C326.7 169.1 334.6 165.5 339.4 164.0 C344.2 162.5 343.1 161.2 349.0 162.5 C354.9 163.8 361.5 164.9 375.0 172.0 C388.5 179.1 416.4 196.2 430.0 205.0 C443.6 213.8 447.4 218.4 456.4 225.0 C465.4 231.6 477.0 239.6 483.9 244.5 C490.8 249.4 493.2 252.2 497.6 254.6 C502.0 256.9 505.8 257.8 510.2 258.6 C514.6 259.4 519.0 258.9 523.8 259.4 C528.6 259.9 532.2 261.4 539.0 261.7 C545.8 262.0 557.9 261.8 564.3 261.4 C570.7 261.0 572.8 259.3 577.3 259.4 C581.8 259.4 586.3 260.7 591.4 261.7 C596.5 262.7 602.6 264.0 607.9 265.5 C613.2 267.0 618.2 268.5 623.2 270.8 C628.2 273.1 630.2 274.3 638.0 279.2 C645.8 284.1 659.8 293.5 669.8 300.0 C679.8 306.5 688.5 311.5 697.8 318.1 C707.1 324.7 716.6 332.6 725.8 339.5 C735.0 346.4 745.3 354.2 753.0 359.3 C760.7 364.4 766.3 367.7 772.0 370.0 C777.7 372.3 783.0 372.7 787.2 373.2 C791.4 373.7 793.5 372.9 797.3 373.2 C801.1 373.5 805.4 374.7 810.0 375.0 C814.6 375.3 821.0 375.3 825.2 375.0 C829.4 374.7 830.5 373.5 835.4 373.2 C840.3 372.9 848.2 373.9 854.4 373.2 C860.6 372.4 867.6 369.6 872.7 368.7 C877.9 367.8 879.0 367.8 885.3 367.5 C891.6 367.2 902.2 366.4 910.7 366.8 C919.2 367.2 928.6 368.9 936.0 370.0 C943.4 371.1 951.8 372.7 955.0 373.2" stroke="#ae2626" stroke-width="1.2" fill="none"/><path d="M241.7 196.6 C242.8 195.2 244.8 190.5 248.1 188.0 C251.4 185.5 258.0 183.9 261.4 181.8 C264.8 179.7 265.5 178.7 268.4 175.5 C271.3 172.3 275.2 166.8 278.6 162.8 C282.0 158.8 284.9 155.3 288.7 151.4 C292.5 147.5 297.2 142.0 301.4 139.3 C305.6 136.7 309.8 137.0 314.0 135.5 C318.2 134.0 323.1 131.2 326.7 130.5 C330.3 129.8 332.2 128.8 335.6 131.0 C339.0 133.2 342.1 135.6 347.0 143.8 C351.9 152.0 359.5 169.0 365.0 180.0 C370.5 191.0 376.3 201.7 380.0 210.0 C383.7 218.3 383.3 221.7 387.0 230.0 C390.7 238.3 397.4 252.7 402.2 259.7 C407.0 266.7 411.4 269.1 416.0 272.0 C420.6 274.9 426.4 276.4 429.7 277.3 C433.0 278.2 431.4 279.8 435.9 277.3 C440.3 274.8 449.8 265.6 456.4 262.2 C463.0 258.8 468.9 258.3 475.8 257.1 C482.7 255.9 491.9 254.5 497.6 255.0 C503.3 255.5 505.8 259.1 510.2 260.2 C514.6 261.3 519.3 261.4 523.8 261.7 C528.3 262.0 531.7 262.1 537.3 262.1 C542.9 262.1 552.1 261.9 557.5 261.7 C562.9 261.5 565.1 260.6 569.7 260.9 C574.3 261.1 579.9 261.8 585.0 263.2 C590.1 264.6 595.1 266.5 600.2 269.3 C605.3 272.1 610.9 275.9 615.5 280.0 C620.1 284.1 624.0 288.7 627.8 293.8 C631.5 298.9 635.1 306.3 638.0 310.6 C640.9 314.9 639.4 313.5 645.0 319.8 C650.6 326.1 662.4 339.8 671.4 348.6 C680.4 357.4 692.2 367.1 699.1 372.5 C706.0 377.9 706.2 378.4 712.6 380.7 C719.0 383.0 730.7 385.3 737.3 386.5 C743.9 387.7 746.4 389.5 752.2 388.1 C758.0 386.7 766.6 380.6 772.0 378.2 C777.4 375.8 779.4 374.9 784.7 373.8 C790.0 372.8 797.4 373.3 803.7 371.9 C810.0 370.5 817.4 367.3 822.7 365.6 C828.0 363.9 831.2 362.9 835.4 361.8 C839.6 360.7 843.8 359.5 848.0 359.2 C852.2 358.9 854.1 359.6 860.7 359.9 C867.4 360.2 881.7 360.4 887.9 361.1 C894.1 361.8 894.2 362.7 898.0 364.3 C901.8 365.9 906.5 368.3 910.7 370.6 C914.9 372.9 919.2 376.2 923.4 378.2 C927.6 380.2 930.7 381.2 936.0 382.7 C941.3 384.2 951.8 386.4 955.0 387.1" stroke="#ae2626" stroke-width="1.2" fill="none"/><g stroke-width="1" stroke-dasharray="1.5 1.5" fill="none"><path d="M245.6 153.3L276.7 96.9" stroke="#1a1a90"/><path d="M366.3 245.2L384.2 301.4" stroke="#902020"/><path d="M508.3 240.6L525.8 269.3" stroke="#1a1a90"/><path d="M562 254L606.4 310.9" stroke="#902020"/><path d="M798 357.3L910.7 387.1" stroke="#1a1a90"/></g><path d="M241.3 148.8V181.8 M239.3 159.5H241.3M241.3 153.8H243.3 M248.0 160.9V166.0 M246.0 164.2H248.0M248.0 161.3H250.0 M254.7 161.5V177.4 M252.7 170.0H254.7M254.7 167.3H256.7 M261.5 159.0V179.3 M259.5 160.2H261.5M261.5 169.3H263.5 M268.2 126.0V172.3 M266.2 127.7H268.2M268.2 146.1H270.2 M274.9 99.4V140.6 M272.9 102.3H274.9M274.9 103.1H276.9 M281.7 95.6V128.6 M279.7 109.6H281.7M281.7 122.9H283.7 M288.4 114.6V136.2 M286.4 117.3H288.4M288.4 119.4H290.4 M295.1 112.0V139.3 M293.1 129.1H295.1M295.1 137.9H297.1 M301.9 104.5V133.0 M299.9 120.9H301.9M301.9 115.8H303.9 M308.6 126.0V147.6 M306.6 147.1H308.6M308.6 127.0H310.6 M315.3 141.2V159.0 M313.3 156.5H315.3M315.3 146.4H317.3 M322.1 133.0V149.5 M320.1 135.4H322.1M322.1 134.9H324.1 M328.8 119.7V145.7 M326.8 127.7H328.8M328.8 140.9H330.8 M335.5 140.0V160.9 M333.5 143.8H335.5M335.5 152.2H337.5 M342.2 146.3V182.4 M340.2 169.4H342.2M342.2 159.7H344.2 M349.0 175.9V232.2 M347.0 206.7H349.0M349.0 179.4H351.0 M355.7 206.5V226.3 M353.7 207.7H355.7M355.7 210.6H357.7 M362.4 209.5V246.0 M360.4 234.3H362.4M362.4 225.1H364.4 M369.2 228.4V279.6 M367.2 244.5H369.2M369.2 258.4H371.2 M375.9 254.4V295.6 M373.9 273.1H375.9M375.9 266.8H377.9 M382.6 278.8V324.0 M380.6 314.7H382.6M382.6 310.4H384.6 M389.4 291.8V317.8 M387.4 298.1H389.4M389.4 306.7H391.4 M396.1 274.2V296.4 M394.1 285.9H396.1M396.1 293.6H398.1 M402.8 262.8V286.5 M400.8 280.1H402.8M402.8 269.6H404.8 M409.6 267.4V278.8 M407.6 278.6H409.6M409.6 268.7H411.6 M416.3 261.3V274.2 M414.3 266.7H416.3M416.3 271.1H418.3 M423.0 261.3V273.5 M421.0 263.2H423.0M423.0 267.3H425.0 M429.8 257.4V270.4 M427.8 257.9H429.8M429.8 266.1H431.8 M436.5 243.7V259.7 M434.5 255.9H436.5M436.5 252.9H438.5 M443.2 248.3V259.0 M441.2 257.7H443.2M443.2 251.7H445.2 M450.0 246.7V255.1 M448.0 252.5H450.0M450.0 251.7H452.0 M456.7 243.7V255.9 M454.7 250.8H456.7M456.7 249.3H458.7 M463.4 249.8V258.2 M461.4 256.9H463.4M463.4 257.7H465.4 M470.2 251.3V258.2 M468.2 254.6H470.2M470.2 255.9H472.2 M476.9 255.1V260.5 M474.9 255.4H476.9M476.9 258.9H478.9 M483.6 254.0V265.5 M481.6 261.4H483.6M483.6 265.4H485.6 M490.4 257.9V270.8 M488.4 268.5H490.4M490.4 261.6H492.4 M497.1 247.2V263.2 M495.1 253.4H497.1M497.1 257.9H499.1 M503.8 247.2V255.6 M501.8 247.4H503.8M503.8 251.1H505.8 M510.6 240.3V266.3 M508.6 244.7H510.6M510.6 243.3H512.6 M517.3 257.0V264.7 M515.3 257.5H517.3M517.3 262.9H519.3 M524.0 263.2V273.9 M522.0 264.6H524.0M524.0 265.8H526.0 M530.7 265.5V272.4 M528.7 268.2H530.7M530.7 271.5H532.7 M537.5 264.0V273.1 M535.5 264.7H537.5M537.5 268.1H539.5 M544.2 262.4V270.0 M542.2 266.6H544.2M544.2 269.1H546.2 M550.9 260.1V266.3 M548.9 265.2H550.9M550.9 265.5H552.9 M557.7 260.1V267.0 M555.7 262.0H557.7M557.7 263.0H559.7 M564.4 247.9V260.9 M562.4 252.6H564.4M564.4 259.4H566.4 M571.1 244.0V255.6 M569.1 255.1H571.1M571.1 245.8H573.1 M577.9 252.5V262.4 M575.9 254.2H577.9M577.9 254.8H579.9 M584.6 255.6V287.7 M582.6 263.1H584.6M584.6 271.2H586.6 M591.3 278.5V289.2 M589.3 284.8H591.3M591.3 281.3H593.3 M598.1 270.0V289.2 M596.1 270.1H598.1M598.1 278.0H600.1 M604.8 281.5V307.5 M602.8 291.1H604.8M604.8 296.2H606.8 M611.5 298.3V320.5 M609.5 319.5H611.5M611.5 313.6H613.5 M618.3 309.8V336.0 M616.3 323.3H618.3M618.3 326.0H620.3 M625.0 316.5V344.5 M623.0 335.4H625.0M625.0 318.0H627.0 M631.7 323.9V342.8 M629.7 340.9H631.7M631.7 338.6H633.7 M638.5 340.4V355.2 M636.5 353.3H638.5M638.5 352.2H640.5 M645.2 342.8V366.7 M643.2 352.2H645.2M645.2 352.3H647.2 M651.9 345.3V362.6 M649.9 347.1H651.9M651.9 356.3H653.9 M658.7 355.2V366.7 M656.7 355.9H658.7M658.7 356.0H660.7 M665.4 362.6V382.4 M663.4 366.7H665.4M665.4 365.8H667.4 M672.1 354.4V377.4 M670.1 362.2H672.1M672.1 355.6H674.1 M678.9 356.8V384.0 M676.9 356.8H678.9M678.9 360.9H680.9 M685.6 361.8V382.4 M683.6 363.9H685.6M685.6 369.3H687.6 M692.3 376.6V404.6 M690.3 377.3H692.3M692.3 401.1H694.3 M699.0 400.5V422.7 M697.0 414.1H699.0M699.0 403.8H701.0 M705.8 384.0V409.6 M703.8 390.5H705.8M705.8 392.9H707.8 M712.5 373.3V402.1 M710.5 383.8H712.5M712.5 376.8H714.5 M719.2 373.3V389.8 M717.2 387.3H719.2M719.2 389.7H721.2 M726.0 367.5V388.1 M724.0 377.1H726.0M726.0 377.5H728.0 M732.7 371.7V382.4 M730.7 372.6H732.7M732.7 372.8H734.7 M739.4 375.0V389.8 M737.4 380.1H739.4M739.4 378.9H741.4 M746.2 375.8V389.8 M744.2 387.4H746.2M746.2 378.1H748.2 M752.9 369.2V386.5 M750.9 369.6H752.9M752.9 385.7H754.9 M759.6 371.7V376.6 M757.6 374.3H759.6M759.6 372.4H761.6 M766.4 362.6V379.1 M764.4 371.6H766.4M766.4 363.0H768.4 M773.1 364.3V370.8 M771.1 367.7H773.1M773.1 370.7H775.1 M779.8 359.9V371.3 M777.8 369.7H779.8M779.8 367.8H781.8 M786.6 362.4V378.9 M784.6 366.7H786.6M786.6 368.5H788.6 M793.3 358.6V373.2 M791.3 361.0H793.3M793.3 369.9H795.3 M800.0 357.3V366.0 M798.0 361.9H800.0M800.0 364.1H802.0 M806.8 359.2V367.5 M804.8 361.9H806.8M806.8 361.1H808.8 M813.5 363.7V375.7 M811.5 373.4H813.5M813.5 375.5H815.5 M820.2 370.6V379.5 M818.2 378.2H820.2M820.2 377.8H822.2 M827.0 333.2V382.7 M825.0 373.7H827.0M827.0 369.8H829.0 M833.7 339.6V361.8 M831.7 344.6H833.7M833.7 351.1H835.7 M840.4 337.7V352.2 M838.4 342.9H840.4M840.4 338.1H842.4 M847.1 338.3V349.7 M845.1 338.6H847.1M847.1 341.5H849.1 M853.9 345.3V367.5 M851.9 351.1H853.9M853.9 360.7H855.9 M860.6 359.2V371.6 M858.6 371.1H860.6M860.6 364.7H862.6 M867.3 367.5V373.8 M865.3 373.4H867.3M867.3 373.7H869.3 M874.1 366.2V370.0 M872.1 369.8H874.1M874.1 367.6H876.1 M880.8 366.8V377.6 M878.8 369.2H880.8M880.8 369.2H882.8 M887.5 368.7V379.5 M885.5 370.8H887.5M887.5 370.9H889.5 M894.3 363.7V375.7 M892.3 371.2H894.3M894.3 374.5H896.3 M901.0 359.2V377.0 M899.0 374.2H901.0M901.0 367.7H903.0 M907.7 368.1V382.0 M905.7 377.2H907.7M907.7 379.2H909.7 M914.5 384.6V412.5 M912.5 387.0H914.5M914.5 403.0H916.5 M921.2 377.0V396.6 M919.2 394.8H921.2M921.2 392.3H923.2 M927.9 382.7V402.3 M925.9 397.4H927.9M927.9 392.1H929.9 M934.7 384.6V409.3 M932.7 389.0H934.7M934.7 404.1H936.7 M941.4 384.0V407.4 M939.4 391.8H941.4M941.4 402.7H943.4 M948.1 383.3V394.1 M946.1 393.8H948.1M948.1 387.6H950.1 M954.9 385.8V401.7 M952.9 392.2H954.9M954.9 400.9H956.9" stroke="#55b855" stroke-width="1.35" fill="none"/><path d="M244.6 180.8h6 M367.0 218.3h6 M564.0 225.6h6 M507.4 271.0h6 M797.5 385.2h6 M911.5 361.1h6" stroke="#c03030" stroke-width="1.3"/><path d="M247.0 92.0h6 M507.3 184.7h6 M365.0 301.8h6 M564.0 310.0h6 M797.2 301.0h6" stroke="#2020a0" stroke-width="1.3"/><circle cx="245.6" cy="153.3" r="8" fill="#a8a0a0" fill-opacity="0.78"/><circle cx="276.7" cy="96.9" r="8" fill="#a8a0a0" fill-opacity="0.78"/><circle cx="366.3" cy="245.2" r="8" fill="#a8a0a0" fill-opacity="0.78"/><circle cx="384.2" cy="301.4" r="8" fill="#a8a0a0" fill-opacity="0.78"/><circle cx="508.3" cy="240.6" r="8" fill="#a8a0a0" fill-opacity="0.78"/><circle cx="525.8" cy="269.3" r="8" fill="#a8a0a0" fill-opacity="0.78"/><circle cx="562" cy="254" r="8" fill="#a8a0a0" fill-opacity="0.78"/><circle cx="606.4" cy="310.9" r="8" fill="#a8a0a0" fill-opacity="0.78"/><circle cx="798" cy="357.3" r="8" fill="#a8a0a0" fill-opacity="0.78"/><circle cx="910.7" cy="387.1" r="8" fill="#a8a0a0" fill-opacity="0.78"/><path d="M242.4 153.3L245.6 150.1L248.8 153.3L245.6 156.5Z" fill="#106a10" stroke="#c8ffc0" stroke-width="1.2"/><path d="M363.1 245.2L366.3 242.0L369.5 245.2L366.3 248.4Z" fill="#106a10" stroke="#c8ffc0" stroke-width="1.2"/><path d="M505.1 240.6L508.3 237.4L511.5 240.6L508.3 243.8Z" fill="#106a10" stroke="#c8ffc0" stroke-width="1.2"/><path d="M558.8 254.0L562.0 250.8L565.2 254.0L562.0 257.2Z" fill="#106a10" stroke="#c8ffc0" stroke-width="1.2"/><path d="M794.8 357.3L798.0 354.1L801.2 357.3L798.0 360.5Z" fill="#106a10" stroke="#c8ffc0" stroke-width="1.2"/><path d="M909.8 389.0L913.0 385.8L916.2 389.0L913.0 392.2Z" fill="#106a10" stroke="#c8ffc0" stroke-width="1.2"/><path d="M274.1 96.9L278.7 93.3V100.5Z" fill="#6a9a40" fill-opacity="0.6" stroke="#f0e060" stroke-width="1.2"/><path d="M381.6 301.4L386.2 297.8V305.0Z" fill="#6a9a40" fill-opacity="0.6" stroke="#f0e060" stroke-width="1.2"/><path d="M523.2 269.3L527.8 265.7V272.9Z" fill="#6a9a40" fill-opacity="0.6" stroke="#f0e060" stroke-width="1.2"/><path d="M603.8 310.9L608.4 307.3V314.5Z" fill="#6a9a40" fill-opacity="0.6" stroke="#f0e060" stroke-width="1.2"/><path d="M906.4 385.0L911.0 381.4V388.6Z" fill="#6a9a40" fill-opacity="0.6" stroke="#f0e060" stroke-width="1.2"/><path d="M811 72.5h8l-4 4z" fill="#b0b8c0"/><path d="M258 430.5h9l-4.5-4.5z" fill="#a0b0c0"/></svg>
<div class="a" style="left:30.5px;top:449.3px;width:966px;height:1px;background:#d2d2d2;"></div>
<svg style="left:31.799999999999997px;top:456.2px" width="7.2" height="7.2"><path d="M1 1L6.2 6.2M6.2 1L1 6.2" stroke="#151515" stroke-width="1.35"/></svg>
<svg style="left:34px;top:463px" width="5" height="8"><path d="M0.5 0.5h3v7h-3z" fill="none" stroke="#b8b8b8" stroke-width="1"/></svg>
<div class="a" style="left:42.2px;top:453.5px;width:953px;height:20px;background:#ffffff;border-top:1px solid #a8a8a8;border-left:1px solid #c8c8c8"></div>
<svg style="left:46px;top:457px" width="10" height="10"><circle cx="4.5" cy="5" r="3.3" fill="#a8a8a8" stroke="#d4d4d4" stroke-width="1"/></svg>
<div class="t" style="left:58.50px;top:457.54px;font-size:10px;color:#222;transform-origin:0 0;transform:scaleX(0.944);">Balance: 9 829.56 USD&nbsp; Profit/Loss: 0.00&nbsp; Equity: 9 829.56&nbsp; Free margin: 9 829.56</div>
<div class="a" style="left:30.5px;top:474.2px;width:966px;height:1px;background:#cacaca;"></div>
<svg style="left:31.799999999999997px;top:480px" width="7.2" height="7.2"><path d="M1 1L6.2 6.2M6.2 1L1 6.2" stroke="#151515" stroke-width="1.35"/></svg>
<div class="a" style="left:30.8px;top:490.2px;width:10.5px;height:232px;background:#b2cbe4;"></div>
<svg style="left:0;top:0" width="1" height="1"><text transform="translate(39.6,720.6) rotate(-90)" font-family="Liberation Sans" font-size="10.2px" fill="#1a2030" textLength="24.7" lengthAdjust="spacingAndGlyphs">Tester</text></svg>
<div class="a" style="left:42.3px;top:477.6px;width:952.5px;height:1.6px;background:#a0a0a0;"></div>
<div class="a" style="left:42.3px;top:478.5px;width:1px;height:219px;background:#d4d4d4;"></div>
<div class="a" style="left:43.3px;top:478.9px;width:951.5px;height:16.83px;background:#e8e8e8;"></div>
<div class="a" style="left:43.3px;top:495.05px;width:951.5px;height:1px;background:#cccccc;"></div>
<div class="t" style="left:50.00px;top:482.94px;font-size:10px;color:#252525;transform-origin:0 0;transform:scaleX(0.987);">Bars in test</div>
<div class="t" style="right:704.50px;top:482.94px;font-size:10px;color:#252525;transform-origin:100% 0;transform:scaleX(0.940);">11311</div>
<div class="t" style="left:369.70px;top:482.94px;font-size:10px;color:#252525;transform-origin:0 0;transform:scaleX(0.996);">Ticks modelled</div>
<div class="t" style="right:381.70px;top:482.94px;font-size:10px;color:#252525;transform-origin:100% 0;transform:scaleX(0.890);">22461969</div>
<div class="t" style="left:692.80px;top:482.94px;font-size:10px;color:#252525;transform-origin:0 0;transform:scaleX(0.989);">Modelling quality</div>
<div class="t" style="right:56.80px;top:482.94px;font-size:10px;color:#252525;transform-origin:100% 0;">n/a</div>
<div class="a" style="left:43.3px;top:495.73px;width:951.5px;height:16.83px;background:#ffffff;"></div>
<div class="a" style="left:43.3px;top:511.88px;width:951.5px;height:1px;background:#cccccc;"></div>
<div class="t" style="left:50.00px;top:499.76px;font-size:10px;color:#252525;transform-origin:0 0;transform:scaleX(0.993);">Mismatched charts errors</div>
<div class="t" style="right:704.50px;top:499.76px;font-size:10px;color:#252525;transform-origin:100% 0;transform:scaleX(0.890);">18020</div>
<div class="a" style="left:368.1px;top:496.9px;width:624.2px;height:14.4px;background:#00ee00;border:1px solid #7090b0"></div>
<div class="a" style="left:369.1px;top:497.9px;width:54.5px;height:12.4px;background:#a9a9a9;"></div>
<div class="a" style="left:43.3px;top:512.56px;width:951.5px;height:16.83px;background:#e8e8e8;"></div>
<div class="a" style="left:43.3px;top:528.71px;width:951.5px;height:1px;background:#cccccc;"></div>
<div class="t" style="left:50.00px;top:516.59px;font-size:10px;color:#252525;transform-origin:0 0;transform:scaleX(0.995);">Initial deposit</div>
<div class="t" style="right:704.50px;top:516.59px;font-size:10px;color:#252525;transform-origin:100% 0;transform:scaleX(0.890);">10000.00</div>
<div class="t" style="left:369.70px;top:516.59px;font-size:10px;color:#252525;transform-origin:0 0;"></div>
<div class="t" style="right:381.70px;top:516.59px;font-size:10px;color:#252525;transform-origin:100% 0;"></div>
<div class="t" style="left:692.80px;top:516.59px;font-size:10px;color:#252525;transform-origin:0 0;transform:scaleX(0.979);">Spread</div>
<div class="t" style="right:56.80px;top:516.59px;font-size:10px;color:#252525;transform-origin:100% 0;transform:scaleX(0.964);">Current (39)</div>
<div class="a" style="left:43.3px;top:529.39px;width:951.5px;height:16.83px;background:#ffffff;"></div>
<div class="a" style="left:43.3px;top:545.54px;width:951.5px;height:1px;background:#cccccc;"></div>
<div class="t" style="left:50.00px;top:533.42px;font-size:10px;color:#252525;transform-origin:0 0;transform:scaleX(1.008);">Total net profit</div>
<div class="t" style="right:704.50px;top:533.42px;font-size:10px;color:#252525;transform-origin:100% 0;transform:scaleX(0.901);">-991.48</div>
<div class="t" style="left:369.70px;top:533.42px;font-size:10px;color:#252525;transform-origin:0 0;transform:scaleX(0.985);">Gross profit</div>
<div class="t" style="right:381.70px;top:533.42px;font-size:10px;color:#252525;transform-origin:100% 0;transform:scaleX(0.909);">4114.07</div>
<div class="t" style="left:692.80px;top:533.42px;font-size:10px;color:#252525;transform-origin:0 0;transform:scaleX(0.984);">Gross loss</div>
<div class="t" style="right:56.80px;top:533.42px;font-size:10px;color:#252525;transform-origin:100% 0;transform:scaleX(0.899);">-5105.55</div>
<div class="a" style="left:43.3px;top:546.22px;width:951.5px;height:16.83px;background:#e8e8e8;"></div>
<div class="a" style="left:43.3px;top:562.37px;width:951.5px;height:1px;background:#cccccc;"></div>
<div class="t" style="left:50.00px;top:550.25px;font-size:10px;color:#252525;transform-origin:0 0;transform:scaleX(0.987);">Profit factor</div>
<div class="t" style="right:704.50px;top:550.25px;font-size:10px;color:#252525;transform-origin:100% 0;transform:scaleX(0.890);">0.81</div>
<div class="t" style="left:369.70px;top:550.25px;font-size:10px;color:#252525;transform-origin:0 0;transform:scaleX(0.993);">Expected payoff</div>
<div class="t" style="right:381.70px;top:550.25px;font-size:10px;color:#252525;transform-origin:100% 0;transform:scaleX(0.906);">-2.77</div>
<div class="t" style="left:692.80px;top:550.25px;font-size:10px;color:#252525;transform-origin:0 0;"></div>
<div class="t" style="right:56.80px;top:550.25px;font-size:10px;color:#252525;transform-origin:100% 0;"></div>
<div class="a" style="left:43.3px;top:563.05px;width:951.5px;height:16.83px;background:#ffffff;"></div>
<div class="a" style="left:43.3px;top:579.2px;width:951.5px;height:1px;background:#cccccc;"></div>
<div class="t" style="left:50.00px;top:567.08px;font-size:10px;color:#252525;transform-origin:0 0;transform:scaleX(0.992);">Absolute drawdown</div>
<div class="t" style="right:704.50px;top:567.08px;font-size:10px;color:#252525;transform-origin:100% 0;transform:scaleX(0.890);">1039.38</div>
<div class="t" style="left:369.70px;top:567.08px;font-size:10px;color:#252525;transform-origin:0 0;transform:scaleX(0.990);">Maximal drawdown</div>
<div class="t" style="right:381.70px;top:567.08px;font-size:10px;color:#252525;transform-origin:100% 0;transform:scaleX(0.933);">1173.38 (11.58%)</div>
<div class="t" style="left:692.80px;top:567.08px;font-size:10px;color:#252525;transform-origin:0 0;transform:scaleX(0.991);">Relative drawdown</div>
<div class="t" style="right:56.80px;top:567.08px;font-size:10px;color:#252525;transform-origin:100% 0;transform:scaleX(0.933);">11.58% (1173.38)</div>
<div class="a" style="left:43.3px;top:579.88px;width:951.5px;height:16.83px;background:#e8e8e8;"></div>
<div class="a" style="left:43.3px;top:596.03px;width:951.5px;height:1px;background:#cccccc;"></div>
<div class="t" style="left:50.00px;top:583.91px;font-size:10px;color:#252525;transform-origin:0 0;transform:scaleX(1.010);">Total trades</div>
<div class="t" style="right:704.50px;top:583.91px;font-size:10px;color:#252525;transform-origin:100% 0;transform:scaleX(0.890);">358</div>
<div class="t" style="left:369.70px;top:583.91px;font-size:10px;color:#252525;transform-origin:0 0;transform:scaleX(0.994);">Short positions (won %)</div>
<div class="t" style="right:381.70px;top:583.91px;font-size:10px;color:#252525;transform-origin:100% 0;transform:scaleX(0.924);">179 (30.17%)</div>
<div class="t" style="left:692.80px;top:583.91px;font-size:10px;color:#252525;transform-origin:0 0;transform:scaleX(0.995);">Long positions (won %)</div>
<div class="t" style="right:56.80px;top:583.91px;font-size:10px;color:#252525;transform-origin:100% 0;transform:scaleX(0.924);">179 (27.37%)</div>
<div class="a" style="left:43.3px;top:596.71px;width:951.5px;height:16.83px;background:#ffffff;"></div>
<div class="a" style="left:43.3px;top:612.86px;width:951.5px;height:1px;background:#cccccc;"></div>
<div class="t" style="left:50.00px;top:600.74px;font-size:10px;color:#252525;transform-origin:0 0;"></div>
<div class="t" style="right:704.50px;top:600.74px;font-size:10px;color:#252525;transform-origin:100% 0;"></div>
<div class="t" style="left:369.70px;top:600.74px;font-size:10px;color:#252525;transform-origin:0 0;transform:scaleX(0.994);">Profit trades (% of total)</div>
<div class="t" style="right:381.70px;top:600.74px;font-size:10px;color:#252525;transform-origin:100% 0;transform:scaleX(0.924);">103 (28.77%)</div>
<div class="t" style="left:692.80px;top:600.74px;font-size:10px;color:#252525;transform-origin:0 0;transform:scaleX(0.995);">Loss trades (% of total)</div>
<div class="t" style="right:56.80px;top:600.74px;font-size:10px;color:#252525;transform-origin:100% 0;transform:scaleX(0.924);">255 (71.23%)</div>
<div class="a" style="left:43.3px;top:613.54px;width:951.5px;height:16.83px;background:#e8e8e8;"></div>
<div class="a" style="left:43.3px;top:629.69px;width:951.5px;height:1px;background:#cccccc;"></div>
<div class="t" style="left:50.00px;top:617.57px;font-size:10px;color:#252525;transform-origin:0 0;"></div>
<div class="t" style="right:704.50px;top:617.57px;font-size:10px;color:#252525;transform-origin:100% 0;transform:scaleX(0.983);">Largest</div>
<div class="t" style="left:369.70px;top:617.57px;font-size:10px;color:#252525;transform-origin:0 0;">profit trade</div>
<div class="t" style="right:381.70px;top:617.57px;font-size:10px;color:#252525;transform-origin:100% 0;transform:scaleX(0.890);">40.29</div>
<div class="t" style="left:692.80px;top:617.57px;font-size:10px;color:#252525;transform-origin:0 0;">loss trade</div>
<div class="t" style="right:56.80px;top:617.57px;font-size:10px;color:#252525;transform-origin:100% 0;transform:scaleX(0.903);">-20.95</div>
<div class="a" style="left:43.3px;top:630.37px;width:951.5px;height:16.83px;background:#ffffff;"></div>
<div class="a" style="left:43.3px;top:646.52px;width:951.5px;height:1px;background:#cccccc;"></div>
<div class="t" style="left:50.00px;top:634.40px;font-size:10px;color:#252525;transform-origin:0 0;"></div>
<div class="t" style="right:704.50px;top:634.40px;font-size:10px;color:#252525;transform-origin:100% 0;transform:scaleX(0.987);">Average</div>
<div class="t" style="left:369.70px;top:634.40px;font-size:10px;color:#252525;transform-origin:0 0;">profit trade</div>
<div class="t" style="right:381.70px;top:634.40px;font-size:10px;color:#252525;transform-origin:100% 0;transform:scaleX(0.890);">39.94</div>
<div class="t" style="left:692.80px;top:634.40px;font-size:10px;color:#252525;transform-origin:0 0;">loss trade</div>
<div class="t" style="right:56.80px;top:634.40px;font-size:10px;color:#252525;transform-origin:100% 0;transform:scaleX(0.903);">-20.02</div>
<div class="a" style="left:43.3px;top:647.2px;width:951.5px;height:16.83px;background:#e8e8e8;"></div>
<div class="a" style="left:43.3px;top:663.35px;width:951.5px;height:1px;background:#cccccc;"></div>
<div class="t" style="left:50.00px;top:651.23px;font-size:10px;color:#252525;transform-origin:0 0;"></div>
<div class="t" style="right:704.50px;top:651.23px;font-size:10px;color:#252525;transform-origin:100% 0;transform:scaleX(0.981);">Maximum</div>
<div class="t" style="left:369.70px;top:651.23px;font-size:10px;color:#252525;transform-origin:0 0;">consecutive wins (profit in money)</div>
<div class="t" style="right:381.70px;top:651.23px;font-size:10px;color:#252525;transform-origin:100% 0;transform:scaleX(0.913);">3 (120.36)</div>
<div class="t" style="left:692.80px;top:651.23px;font-size:10px;color:#252525;transform-origin:0 0;">consecutive losses (loss in money)</div>
<div class="t" style="right:56.80px;top:651.23px;font-size:10px;color:#252525;transform-origin:100% 0;transform:scaleX(0.916);">16 (-321.07)</div>
<div class="a" style="left:43.3px;top:664.03px;width:951.5px;height:16.83px;background:#ffffff;"></div>
<div class="a" style="left:43.3px;top:680.18px;width:951.5px;height:1px;background:#cccccc;"></div>
<div class="t" style="left:50.00px;top:668.06px;font-size:10px;color:#252525;transform-origin:0 0;"></div>
<div class="t" style="right:704.50px;top:668.06px;font-size:10px;color:#252525;transform-origin:100% 0;transform:scaleX(0.978);">Maximal</div>
<div class="t" style="left:369.70px;top:668.06px;font-size:10px;color:#252525;transform-origin:0 0;">consecutive profit (count of wins)</div>
<div class="t" style="right:381.70px;top:668.06px;font-size:10px;color:#252525;transform-origin:100% 0;transform:scaleX(0.913);">120.36 (3)</div>
<div class="t" style="left:692.80px;top:668.06px;font-size:10px;color:#252525;transform-origin:0 0;">consecutive loss (count of losses)</div>
<div class="t" style="right:56.80px;top:668.06px;font-size:10px;color:#252525;transform-origin:100% 0;transform:scaleX(0.916);">-321.07 (16)</div>
<div class="a" style="left:43.3px;top:680.86px;width:951.5px;height:16.83px;background:#e8e8e8;"></div>
<div class="a" style="left:43.3px;top:697.01px;width:951.5px;height:1px;background:#cccccc;"></div>
<div class="t" style="left:50.00px;top:684.89px;font-size:10px;color:#252525;transform-origin:0 0;"></div>
<div class="t" style="right:704.50px;top:684.89px;font-size:10px;color:#252525;transform-origin:100% 0;transform:scaleX(0.987);">Average</div>
<div class="t" style="left:369.70px;top:684.89px;font-size:10px;color:#252525;transform-origin:0 0;">consecutive wins</div>
<div class="t" style="right:381.70px;top:684.89px;font-size:10px;color:#252525;transform-origin:100% 0;transform:scaleX(0.890);">1</div>
<div class="t" style="left:692.80px;top:684.89px;font-size:10px;color:#252525;transform-origin:0 0;">consecutive losses</div>
<div class="t" style="right:56.80px;top:684.89px;font-size:10px;color:#252525;transform-origin:100% 0;transform:scaleX(0.890);">3</div>
<div class="a" style="left:43.3px;top:697.7px;width:951.5px;height:6.2px;background:#ffffff;"></div>
<div class="a" style="left:42.3px;top:703.8px;width:147px;height:1.4px;background:#282828;"></div>
<div class="a" style="left:234.5px;top:703.8px;width:760.3px;height:1.4px;background:#282828;"></div>
<div class="a" style="left:189.2px;top:703.8px;width:45.3px;height:16.7px;background:#ffffff;border:1.2px solid #303030;border-top:none"></div>
<div class="t" style="left:53.80px;top:707.99px;font-size:9.7px;color:#7c7c7c;transform-origin:0 0;transform:scaleX(0.982);">Settings</div>
<div class="t" style="left:105.40px;top:707.99px;font-size:9.7px;color:#7c7c7c;transform-origin:0 0;transform:scaleX(0.978);">Results</div>
<div class="t" style="left:153.60px;top:707.99px;font-size:9.7px;color:#7c7c7c;transform-origin:0 0;transform:scaleX(0.972);">Graph</div>
<div class="t" style="left:197.00px;top:707.99px;font-size:9.7px;color:#111;transform-origin:0 0;transform:scaleX(0.976);">Report</div>
<div class="t" style="left:243.30px;top:707.99px;font-size:9.7px;color:#7c7c7c;transform-origin:0 0;transform:scaleX(0.985);">Journal</div>
<div class="a" style="left:97px;top:708px;width:1px;height:11px;background:#a0a0a0;"></div>
<div class="a" style="left:145.3px;top:708px;width:1px;height:11px;background:#a0a0a0;"></div>
<div class="a" style="left:283.8px;top:708px;width:1px;height:11px;background:#a0a0a0;"></div>
<div class="a" style="left:30.5px;top:725px;width:966px;height:1px;background:#cfcfcf;"></div>
<div class="a" style="left:30.5px;top:726px;width:966px;height:17.5px;background:#f0f0f0;"></div>
<div class="t" style="left:31.90px;top:731.50px;font-size:9.8px;color:#1a1a1a;transform-origin:0 0;transform:scaleX(0.965);">For Help, press F1</div>
<div class="a" style="left:397.8px;top:727.5px;width:1px;height:16px;background:#d0d0d0;"></div>
<div class="a" style="left:495.5px;top:727.5px;width:1px;height:16px;background:#d0d0d0;"></div>
<div class="a" style="left:581.4px;top:727.5px;width:1px;height:16px;background:#d0d0d0;"></div>
<div class="a" style="left:640.6px;top:727.5px;width:1px;height:16px;background:#d0d0d0;"></div>
<div class="a" style="left:700.8px;top:727.5px;width:1px;height:16px;background:#d0d0d0;"></div>
<div class="a" style="left:758px;top:727.5px;width:1px;height:16px;background:#d0d0d0;"></div>
<div class="a" style="left:816px;top:727.5px;width:1px;height:16px;background:#d0d0d0;"></div>
<div class="a" style="left:872.5px;top:727.5px;width:1px;height:16px;background:#d0d0d0;"></div>
<div class="t" style="left:403.00px;top:731.50px;font-size:9.8px;color:#1a1a1a;transform-origin:0 0;transform:scaleX(0.977);">Default</div>
<svg style="left:877px;top:730px" width="20" height="13"><g stroke-width="1.5"><line x1="1.0" y1="12" x2="1.0" y2="1" stroke="#6a9a20"/><line x1="3.5" y1="12" x2="3.5" y2="2" stroke="#6a9a20"/><line x1="6.0" y1="12" x2="6.0" y2="1" stroke="#6a9a20"/><line x1="8.5" y1="12" x2="8.5" y2="2" stroke="#1a4a80"/><line x1="11.0" y1="12" x2="11.0" y2="1" stroke="#1a4a80"/><line x1="13.5" y1="12" x2="13.5" y2="2" stroke="#1a4a80"/><line x1="16.0" y1="12" x2="16.0" y2="1" stroke="#1a4a80"/><line x1="18.5" y1="12" x2="18.5" y2="2" stroke="#1a4a80"/></g></svg>
<div class="t" style="left:899.40px;top:731.50px;font-size:9.8px;color:#1a1a1a;transform-origin:0 0;transform:scaleX(0.975);">22921/35 kb</div>
<svg style="left:984px;top:731px" width="14" height="14"><g stroke="#5a8090" stroke-width="1"><line x1="13" y1="2" x2="2" y2="13"/><line x1="13" y1="6" x2="6" y2="13"/><line x1="13" y1="10" x2="10" y2="13"/></g></svg>
</body></html>
